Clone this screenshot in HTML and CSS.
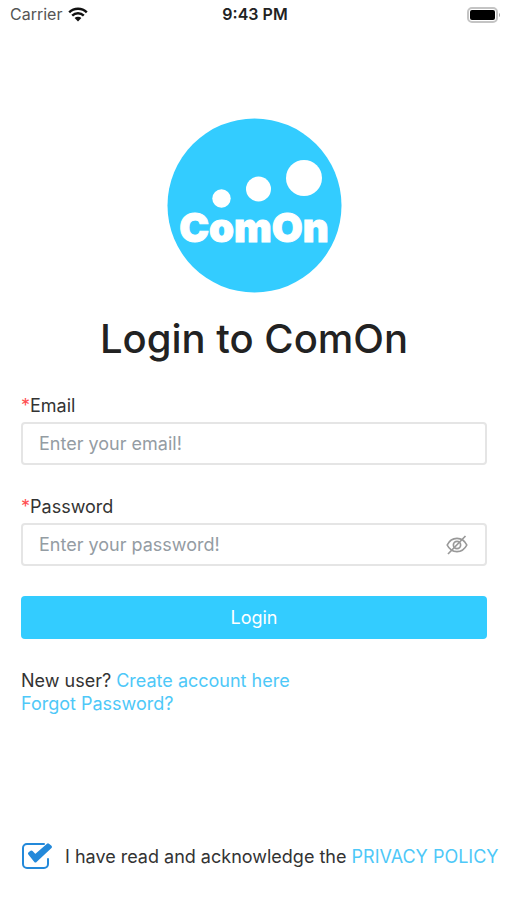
FILE: index.html
```html
<!DOCTYPE html>
<html lang="en">
<head>
    <meta charset="UTF-8">
    <meta name="viewport" content="width=device-width, initial-scale=1.0">
    <title>Login to ComOn</title>
    <link rel="stylesheet" href="styles.css">
</head>
<body>
    <header class="status-bar">
        <div class="carrier">
            <span>Carrier</span>
            <svg class="wifi" viewBox="0 0 20 15" aria-hidden="true">
                <path d="M1.2 5.4a12.5 12.5 0 0 1 17.6 0M4.2 8.6a8.2 8.2 0 0 1 11.6 0" fill="none" stroke="#111" stroke-width="2.4"/>
                <path d="M6.6 11.1a4.8 4.8 0 0 1 6.8 0L10 14.6z" fill="#111"/>
            </svg>
        </div>
        <div class="time">9:43 PM</div>
        <svg class="battery" viewBox="0 0 34 18" aria-hidden="true">
            <rect x="2" y="2" width="29" height="14" rx="4" fill="#fff" stroke="#c4c4c4" stroke-width="2"/>
            <rect x="4" y="4" width="25" height="10" rx="2" fill="#000"/>
            <path d="M33 7v4a2.300 2.300 0 0 0 0-4z" fill="#aaa"/>
        </svg>
    </header>

    <main class="login">
        <svg class="logo" viewBox="0 0 175 175" role="img" aria-label="ComOn">
            <circle cx="87.500" cy="87.500" r="87" fill="#33ccff"/>
            <circle cx="54.500" cy="80.500" r="9.200" fill="#fff"/>
            <circle cx="91.500" cy="71" r="12.500" fill="#fff"/>
            <circle cx="137" cy="60" r="18" fill="#fff"/>
            <text class="logo-text" x="87" y="124" text-anchor="middle">ComOn</text>
        </svg>
        <h1>Login to ComOn</h1>

        <form class="form">
            <div class="field">
                <label for="email"><span class="star">*</span>Email</label>
                <input class="text-input" id="email" type="email" placeholder="Enter your email!">
            </div>
            <div class="field">
                <label for="password"><span class="star">*</span>Password</label>
                <div class="password-box">
                    <input class="text-input" id="password" type="password" placeholder="Enter your password!">
                    <button class="eye" type="button" aria-label="Show password">
                        <svg viewBox="0 0 22 20" fill="none" stroke="#999" stroke-width="1.7" aria-hidden="true">
                            <path d="M1.200 10C5.500 1.200 16.500 1.200 20.800 10 16.500 18.800 5.500 18.800 1.200 10z"/>
                            <circle cx="11" cy="10" r="3.600"/>
                            <path d="M2 19L19.500 1"/>
                        </svg>
                    </button>
                </div>
            </div>
            <button class="login-btn" type="submit">Login</button>
        </form>

        <div class="links">
            <div>New user? <a href="#">Create account here</a></div>
            <div><a href="#">Forgot Password?</a></div>
        </div>
    </main>

    <footer class="policy">
        <span class="check">
            <input id="agree" type="checkbox" checked>
            <svg viewBox="0 0 32 28" aria-hidden="true">
                <path class="check-box" d="M23 2H6a4 4 0 0 0-4 4v16a4 4 0 0 0 4 4h17a4 4 0 0 0 4-4v-5"/>
                <path class="check-mark" d="M8.500 11.500l6 7.500L29.500 5 27 2.800 14.300 14 10.500 10z"/>
            </svg>
        </span>
        <div><label for="agree">I have read and acknowledge the</label> <a href="#">PRIVACY POLICY</a></div>
    </footer>
</body>
</html>
```
FILE: styles.css
```css
* {
    box-sizing: border-box;
}
body {
    margin: 0;
    min-height: 100vh;
    display: flex;
    flex-direction: column;
    background: #fff;
    color: #333;
    font-family: Inter, "Liberation Sans", sans-serif;
    font-size: 18px;
    line-height: 23px;
}
a {
    color: #4ec8f8;
    text-decoration: none;
}
input, button {
    font-family: inherit;
    font-size: inherit;
}

/* status bar */
.status-bar {
    display: grid;
    grid-template-columns: 1fr auto 1fr;
    align-items: center;
    height: 29px;
    padding: 0 7px 0 10px;
    font-size: 16px;
}
.carrier {
    display: flex;
    align-items: center;
    gap: 6px;
    color: #555;
}
.wifi {
    width: 20px;
    height: 15px;
}
.time {
    font-weight: 600;
    color: #222;
}
.battery {
    justify-self: end;
    width: 34px;
    height: 18px;
}

/* login */
.login {
    padding: 89px 20px 0 21px;
}
.logo {
    display: block;
    width: 175px;
    height: 175px;
    margin: 0 auto;
}
.logo-text {
    font-family: Inter, sans-serif;
    font-weight: 900;
    font-size: 40px;
    fill: #fff;
    stroke: #fff;
    stroke-width: 1;
}
h1 {
    margin: 20px 0 29px;
    font-size: 40px;
    line-height: 52px;
    font-weight: 500;
    text-align: center;
    color: #222;
}
.form {
    display: flex;
    flex-direction: column;
    gap: 30px;
}
.field {
    display: flex;
    flex-direction: column;
    gap: 5px;
}
.star {
    color: #ff4d4f;
}
.text-input {
    width: 100%;
    height: 43px;
    padding: 0 16px;
    border: 2px solid #e5e5e5;
    border-radius: 4px;
    background: #fff;
    color: #333;
}
.text-input::placeholder {
    color: #949ca3;
    opacity: 1;
}
.password-box {
    position: relative;
}
.eye {
    position: absolute;
    right: 19px;
    top: 12px;
    width: 22px;
    height: 20px;
    padding: 0;
    border: 0;
    background: none;
}
.eye svg {
    display: block;
}
.login-btn {
    height: 43px;
    border: 0;
    border-radius: 4px;
    background: #33ccff;
    color: #fff;
}
.links {
    margin-top: 30px;
}

/* privacy policy */
.policy {
    display: flex;
    align-items: center;
    gap: 12px;
    margin-top: auto;
    padding: 0 0 30px 21px;
    white-space: nowrap;
}
.check {
    position: relative;
    width: 32px;
    height: 28px;
}
.check input {
    appearance: none;
    width: 100%;
    height: 100%;
    margin: 0;
}
.check svg {
    position: absolute;
    left: 0;
    top: 0;
    pointer-events: none;
}
.check-box {
    fill: none;
    stroke: #2389da;
    stroke-width: 2;
    stroke-linecap: round;
}
.check-mark {
    fill: #2389da;
    stroke: #2389da;
    stroke-width: 3;
    stroke-linejoin: round;
}
.check input:not(:checked) + svg .check-mark {
    display: none;
}
```
